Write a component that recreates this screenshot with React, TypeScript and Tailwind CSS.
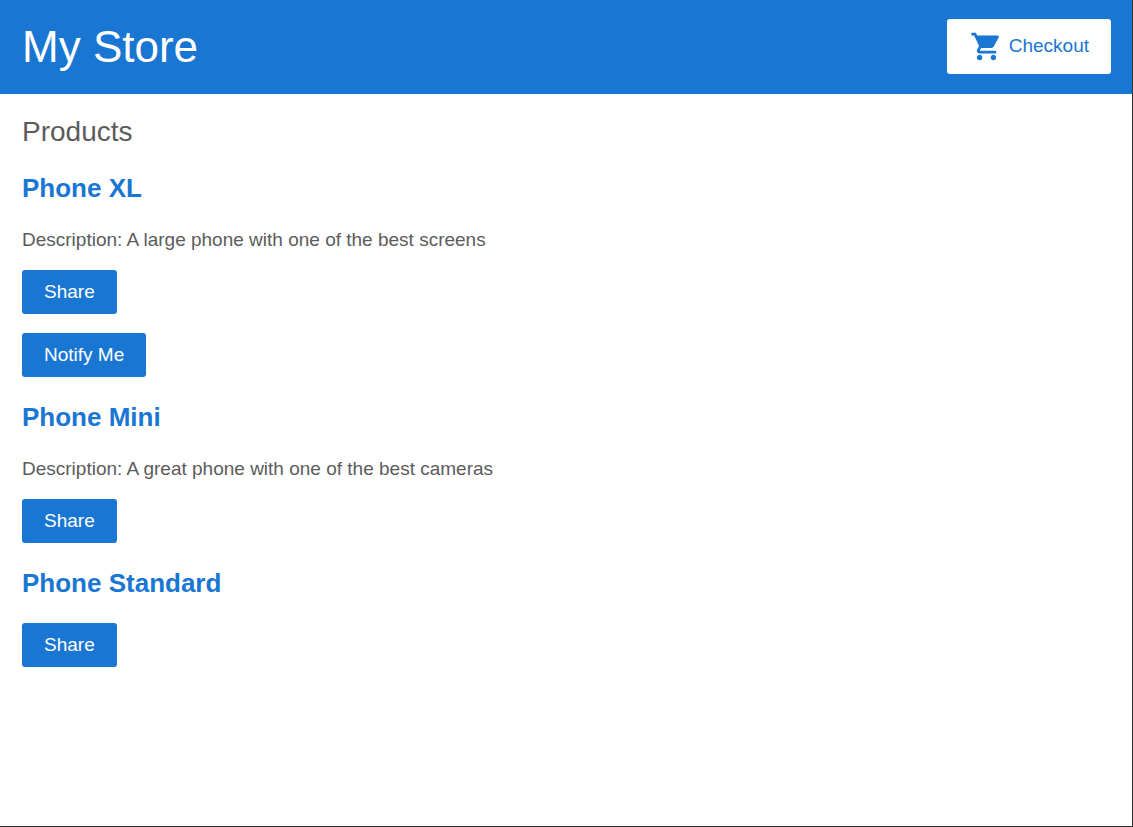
import { MdShoppingCart } from "react-icons/md";

type Product = {
  id: number;
  name: string;
  description?: string;
  canNotify?: boolean;
};

const products: Product[] = [
  { id: 1, name: "Phone XL", description: "A large phone with one of the best screens", canNotify: true },
  { id: 2, name: "Phone Mini", description: "A great phone with one of the best cameras" },
  { id: 3, name: "Phone Standard" },
];

function ActionButton({ label }: { label: string }) {
  return (
    <button type="button" className="h-[44px] cursor-pointer rounded-[3px] bg-[#1976d2] px-[22px] text-[19px] text-white hover:opacity-80">
      {label}
    </button>
  );
}

function TopBar() {
  return (
    <header className="flex items-center justify-between bg-[#1976d2] pt-[19px] pr-[21px] pb-[20px] pl-[22px]">
      <a href="#">
        <h1 className="text-[44px] leading-[55px] text-white">My Store</h1>
      </a>
      <a href="#cart" className="flex items-center gap-[6px] rounded-[3px] bg-white py-[11px] pr-[22px] pl-[23px] text-[19px] text-[#1976d2]">
        <MdShoppingCart size={33} aria-hidden="true" />
        Checkout
      </a>
    </header>
  );
}

function ProductItem({ product }: { product: Product }) {
  return (
    <section>
      <h3 className="my-[25px] text-[26px] leading-[30px] font-bold text-[#1976d2]">
        <a href={`#product-${product.id}`}>{product.name}</a>
      </h3>
      {product.description && (
        <p className="mb-[19px] text-[19px] leading-[23px]">Description: {product.description}</p>
      )}
      <div className="flex flex-col items-start gap-[19px]">
        <ActionButton label="Share" />
        {product.canNotify && <ActionButton label="Notify Me" />}
      </div>
    </section>
  );
}

export default function App() {
  return (
    <div className="min-h-screen border-r border-b border-[#333333] bg-white font-['Liberation_Sans',Arial,sans-serif] text-[#5c5c5c]">
      <TopBar />
      <main className="px-[22px] pt-[22px] pb-[22px]">
        <h2 className="text-[28px] leading-[32px]">Products</h2>
        {products.map((product) => (
          <ProductItem key={product.id} product={product} />
        ))}
      </main>
    </div>
  );
}
